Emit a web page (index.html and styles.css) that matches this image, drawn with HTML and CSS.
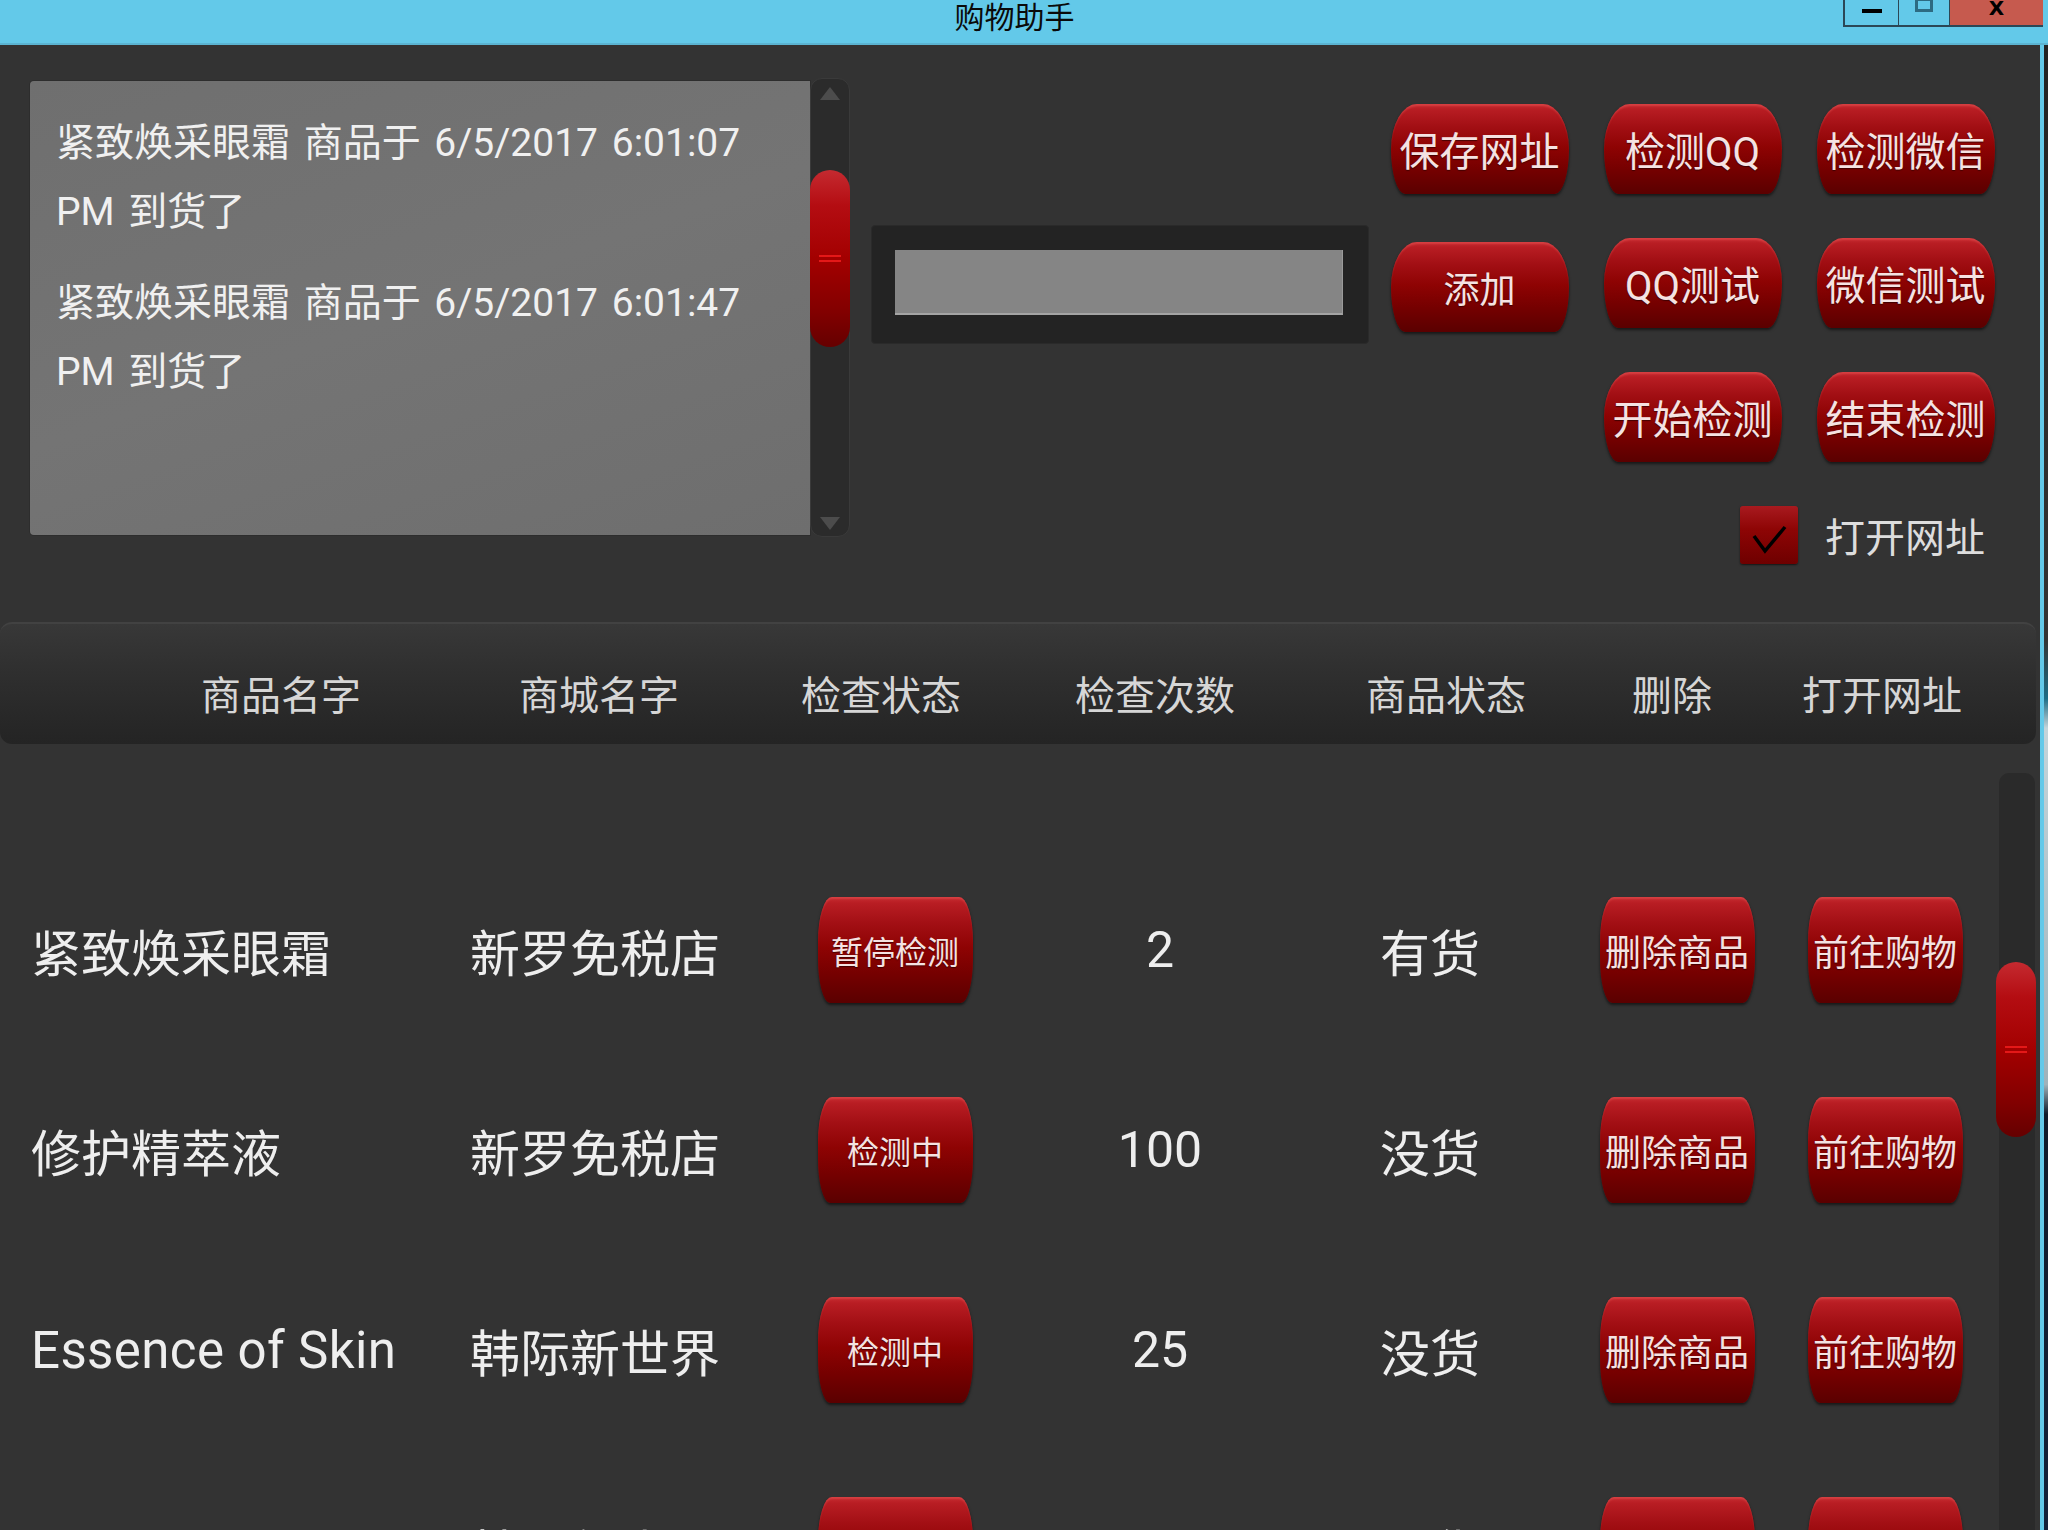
FILE: index.html
```html
<!DOCTYPE html>
<html lang="zh-CN">
<head>
<meta charset="utf-8">
<title>购物助手</title>
<link rel="stylesheet" href="styles.css">
</head>
<body>
<div class="titlebar">
  <div class="tb-left"></div>
  <div class="title">购物助手</div>
  <div class="winbtns">
    <div class="wb min"><span></span></div>
    <div class="wb max"><span></span></div>
    <div class="wb close">X</div>
  </div>
</div>
<div class="main">
  <div class="app">
    <div class="top">
      <div class="logbox">
        <div class="log">
          <p>紧致焕采眼霜 商品于 6/5/2017 6:01:07<br>PM 到货了</p>
          <p>紧致焕采眼霜 商品于 6/5/2017 6:01:47<br>PM 到货了</p>
        </div>
        <div class="vscroll">
          <div class="arrow up"></div>
          <div class="vthumb"><i></i><i></i></div>
          <div class="arrow down"></div>
        </div>
      </div>
      <div class="inputbox"><div class="field"></div></div>
      <div class="controls">
        <div class="btn big">保存网址</div>
        <div class="btn big">检测QQ</div>
        <div class="btn big">检测微信</div>
        <div class="btn big add">添加</div>
        <div class="btn big">QQ测试</div>
        <div class="btn big">微信测试</div>
        <div class="spacer"></div>
        <div class="btn big">开始检测</div>
        <div class="btn big">结束检测</div>
        <div class="checkrow">
          <span class="checkbox"><svg width="58" height="58" viewBox="0 0 58 58"><path d="M14 30 L25 45 L45 21" fill="none" stroke="#000" stroke-width="3.5"/></svg></span>
          <span class="checklabel">打开网址</span>
        </div>
      </div>
    </div>
    <div class="thead">
      <div>商品名字</div>
      <div>商城名字</div>
      <div>检查状态</div>
      <div>检查次数</div>
      <div>商品状态</div>
      <div>删除</div>
      <div>打开网址</div>
    </div>
    <div class="tbody">
      <div class="rows">
        <div class="row">
          <div class="c name">紧致焕采眼霜</div>
          <div class="c shop">新罗免税店</div>
          <div class="c"><div class="btn sm s32">暂停检测</div></div>
          <div class="c">2</div>
          <div class="c">有货</div>
          <div class="c"><div class="btn sm s36">删除商品</div></div>
          <div class="c last"><div class="btn sm s36">前往购物</div></div>
        </div>
        <div class="row">
          <div class="c name">修护精萃液</div>
          <div class="c shop">新罗免税店</div>
          <div class="c"><div class="btn sm s32">检测中</div></div>
          <div class="c">100</div>
          <div class="c">没货</div>
          <div class="c"><div class="btn sm s36">删除商品</div></div>
          <div class="c last"><div class="btn sm s36">前往购物</div></div>
        </div>
        <div class="row">
          <div class="c name latin">Essence of Skin</div>
          <div class="c shop">韩际新世界</div>
          <div class="c"><div class="btn sm s32">检测中</div></div>
          <div class="c">25</div>
          <div class="c">没货</div>
          <div class="c"><div class="btn sm s36">删除商品</div></div>
          <div class="c last"><div class="btn sm s36">前往购物</div></div>
        </div>
        <div class="row">
          <div class="c name"></div>
          <div class="c shop">韩际新世界</div>
          <div class="c"><div class="btn sm s32">检测中</div></div>
          <div class="c"></div>
          <div class="c">没货</div>
          <div class="c"><div class="btn sm s36">删除商品</div></div>
          <div class="c last"><div class="btn sm s36">前往购物</div></div>
        </div>
      </div>
      <div class="track"><div class="tthumb"><i></i><i></i></div></div>
    </div>
  </div>
  <div class="edge"></div>
</div>
</body>
</html>
```

FILE: styles.css
```css
html, body {
  margin: 0;
  padding: 0;
  width: 2048px;
  height: 1530px;
  overflow: hidden;
  background: #333333;
  font-family: Roboto, "Noto Sans CJK SC", sans-serif;
}

/* ---------- title bar ---------- */
.titlebar {
  height: 45px;
  box-sizing: border-box;
  background: #63c9e9;
  border-bottom: 2px solid #5bb4d2;
  display: grid;
  grid-template-columns: 1fr auto 1fr;
  padding-right: 5px;
}
.title {
  font-family: "Noto Sans CJK SC", sans-serif;
  font-size: 30px;
  line-height: 31px;
  color: #0a0a0a;
  margin-left: -14px;
}
.winbtns {
  justify-self: end;
  display: flex;
  height: 27px;
  border-left: 2px solid #2b4756;
  border-bottom: 2px solid #2b4756;
  box-sizing: border-box;
}
.wb {
  height: 25px;
  display: flex;
  justify-content: center;
  box-sizing: border-box;
}
.wb.min {
  width: 54px;
  border-right: 1px solid #2b4756;
  align-items: flex-start;
}
.wb.min span {
  display: block;
  width: 20px;
  height: 4px;
  margin-top: 9px;
  background: #000;
}
.wb.max {
  width: 51px;
  border-right: 1px solid #2b4756;
}
.wb.max span {
  display: block;
  width: 18px;
  height: 13px;
  box-sizing: border-box;
  border: 3px solid #2d6b82;
  border-top-width: 2px;
  margin-top: -1px;
}
.wb.close {
  width: 93px;
  background: #c65a4e;
  font-family: "DejaVu Sans", sans-serif;
  font-weight: bold;
  font-size: 20px;
  line-height: 16px;
  color: #000;
}

/* ---------- main frame ---------- */
.main {
  display: flex;
  height: 1485px;
}
.app {
  width: 2040px;
  height: 1485px;
  background: #333333;
  overflow: hidden;
}
.edge {
  width: 4px;
  border-left: 4px solid #63c9e9;
  background: linear-gradient(to bottom, #222 0, #333 40%, #1d6d86 44%, #c4d4da 46%, #9fb2ba 70%, #0f1a2a 72%, #13213a 100%);
}

/* ---------- top section ---------- */
.top {
  height: 577px;
  box-sizing: border-box;
  padding: 33px 0 0 30px;
  display: flex;
  align-items: flex-start;
}
.logbox {
  display: flex;
  align-items: flex-start;
}
.log {
  width: 780px;
  height: 454px;
  margin-top: 3px;
  box-sizing: border-box;
  padding: 28px 0 0 26px;
  background: linear-gradient(160deg, #6f6f6f 0%, #747474 50%, #6e6e6e 100%);
  border-radius: 4px 0 0 4px;
  box-shadow: 0 0 0 1px #2d2d2d;
  color: #f0f0f0;
  font-size: 39px;
  line-height: 69px;
  word-spacing: 4px;
}
.log p {
  margin: 0 0 22px 0;
}
.vscroll {
  width: 40px;
  height: 459px;
  box-sizing: border-box;
  background: #2b2b2b;
  border: 1px solid #3a3a3a;
  border-radius: 12px;
  display: flex;
  flex-direction: column;
  align-items: center;
}
.arrow {
  width: 0;
  height: 0;
  border-left: 10px solid transparent;
  border-right: 10px solid transparent;
}
.arrow.up {
  margin-top: 8px;
  border-bottom: 13px solid #4c4c4c;
}
.arrow.down {
  margin-top: 170px;
  border-top: 13px solid #4c4c4c;
}
.vthumb {
  width: 40px;
  height: 177px;
  margin-top: 70px;
  border-radius: 20px;
  background: linear-gradient(to bottom, #c52a30 0%, #b40d12 20%, #a30000 50%, #820000 80%, #650000 100%);
  display: flex;
  flex-direction: column;
  align-items: center;
  justify-content: center;
  gap: 3px;
}
.vthumb i, .tthumb i {
  display: block;
  width: 22px;
  height: 2px;
  background: #e41818;
}

.inputbox {
  width: 498px;
  height: 119px;
  margin: 147px 0 0 21px;
  box-sizing: border-box;
  padding: 24px 0 0 23px;
  background: #232323;
  border-radius: 4px;
  border: 1px solid #2a2a2a;
}
.field {
  width: 448px;
  height: 65px;
  box-sizing: border-box;
  background: #858585;
  border-bottom: 2px solid #a4a4a4;
  border-right: 1px solid #9a9a9a;
}

.controls {
  margin: 26px 0 0 19px;
  display: grid;
  grid-template-columns: 183px 183px 183px;
  grid-template-rows: 90px 90px 90px 58px;
  column-gap: 30px;
  row-gap: 44px;
  justify-items: center;
}

/* ---------- buttons ---------- */
.btn {
  display: flex;
  flex-shrink: 0;
  align-items: center;
  justify-content: center;
  box-sizing: border-box;
  color: #f5e2e2;
  font-family: Roboto, "Noto Sans CJK SC", sans-serif;
  white-space: nowrap;
  text-shadow: 0 1px 1px rgba(40, 0, 0, 0.7);
  background: linear-gradient(to bottom, #c72b30 0%, #b81d23 6%, #a20f14 25%, #8e0303 48%, #760000 72%, #5a0000 100%);
  box-shadow: 0 2px 3px rgba(0, 0, 0, 0.55), inset 0 3px 2px -1px rgba(235, 90, 90, 0.45);
}
.btn.big {
  width: 178px;
  height: 90px;
  font-size: 40px;
  border-radius: 26px 26px 14px 14px / 45px 45px 45px 45px;
}
.btn.add {
  font-size: 36px;
  margin-top: 4px;
}
.btn.sm {
  width: 155px;
  height: 106px;
  border-radius: 14px 14px 12px 12px / 44px 44px 44px 44px;
}
.btn.s32 { font-size: 32px; }
.btn.s36 { font-size: 36px; }

.checkrow {
  grid-column: 2 / 4;
  justify-self: end;
  display: flex;
  align-items: center;
  gap: 27px;
  padding-right: 12px;
}
.checkbox {
  width: 58px;
  height: 58px;
  border-radius: 3px;
  background: linear-gradient(to bottom, #a81a1f 0%, #8e0505 40%, #6e0000 100%);
  box-shadow: 0 1px 2px rgba(0, 0, 0, 0.6);
}
.checkbox svg { display: block; }
.checklabel {
  font-size: 40px;
  color: #dddddd;
}

/* ---------- table header ---------- */
.thead {
  width: 2036px;
  height: 122px;
  box-sizing: border-box;
  padding: 18px 0 0 130px;
  display: grid;
  grid-template-columns: 302px 334px 230px 318px 264px 188px 232px;
  align-items: center;
  background: linear-gradient(to bottom, #383838 0%, #2f2f2f 40%, #242424 100%);
  border-top: 2px solid #424242;
  border-radius: 12px;
  color: #d6d6d6;
  font-size: 40px;
  text-align: center;
}

/* ---------- table body ---------- */
.tbody {
  display: flex;
  height: 786px;
}
.rows {
  width: 1990px;
  padding-top: 106px;
}
.row {
  height: 200px;
  display: grid;
  grid-template-columns: 440px 350px 210px 320px 220px 274px 176px;
  align-items: center;
  color: #eeeeee;
  font-size: 50px;
}
.c {
  display: flex;
  justify-content: center;
  align-items: center;
  white-space: nowrap;
}
.c.name {
  justify-content: flex-start;
  padding-left: 31px;
}
.c.latin {
  font-size: 51px;
  letter-spacing: 0.4px;
}
.c.shop {
  justify-content: flex-start;
  padding-left: 30px;
}
.c.last {
  padding-right: 34px;
}
.track {
  width: 36px;
  margin: 29px 0 0 9px;
  background: #2a2a2a;
  border-radius: 10px 10px 0 0;
}
.tthumb {
  width: 40px;
  height: 175px;
  margin: 189px 0 0 -3px;
  border-radius: 20px;
  background: linear-gradient(to bottom, #c52a30 0%, #b40d12 20%, #a30000 50%, #820000 80%, #650000 100%);
  display: flex;
  flex-direction: column;
  align-items: center;
  justify-content: center;
  gap: 3px;
}
```
